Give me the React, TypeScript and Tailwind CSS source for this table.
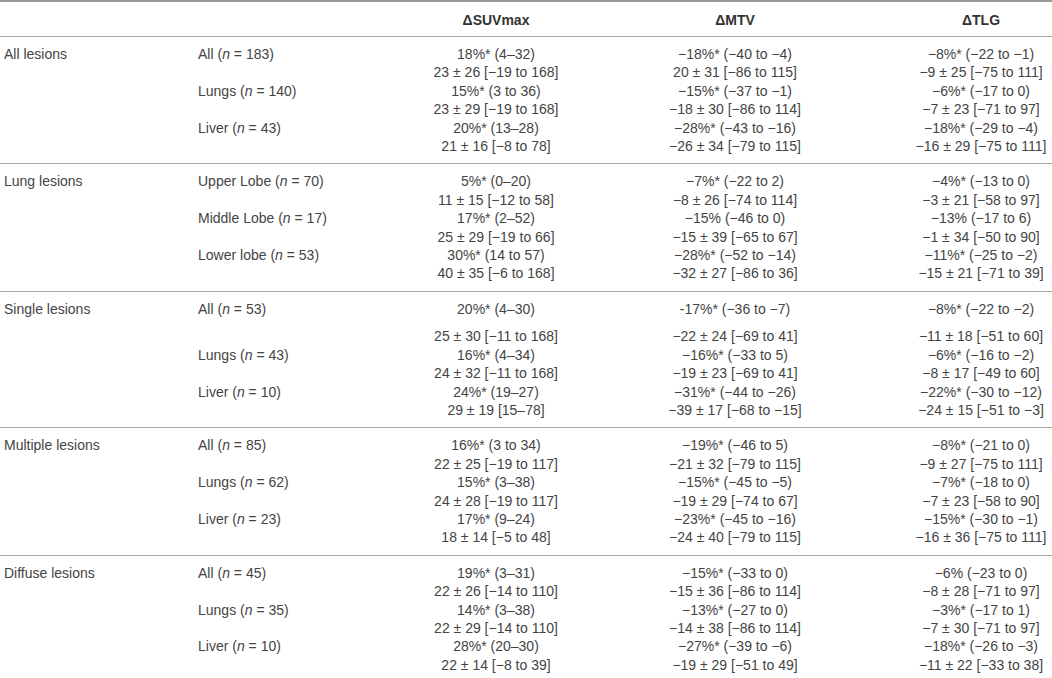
/**
 * Change in PET parameters by lesion group
 * Five lesion groups, each with sub-groups shown as median (IQR) / mean ± SD [range]
 */

type Group = {
  label: string;
  // sub-group labels, one per pair of rows
  subs: string[];
  // six rows of [ΔSUVmax, ΔMTV, ΔTLG]
  rows: string[][];
  // first row gets extra space below (as in the source table)
  loose?: boolean;
};

const groups: Group[] = [
  {
    label: 'All lesions',
    subs: ['All|183', 'Lungs|140', 'Liver|43'],
    rows: [
      ['18%* (4–32)', '−18%* (−40 to −4)', '−8%* (−22 to −1)'],
      ['23 ± 26 [−19 to 168]', '20 ± 31 [−86 to 115]', '−9 ± 25 [−75 to 111]'],
      ['15%* (3 to 36)', '−15%* (−37 to −1)', '−6%* (−17 to 0)'],
      ['23 ± 29 [−19 to 168]', '−18 ± 30 [−86 to 114]', '−7 ± 23 [−71 to 97]'],
      ['20%* (13–28)', '−28%* (−43 to −16)', '−18%* (−29 to −4)'],
      ['21 ± 16 [−8 to 78]', '−26 ± 34 [−79 to 115]', '−16 ± 29 [−75 to 111]'],
    ],
  },
  {
    label: 'Lung lesions',
    subs: ['Upper Lobe|70', 'Middle Lobe|17', 'Lower lobe|53'],
    rows: [
      ['5%* (0–20)', '−7%* (−22 to 2)', '−4%* (−13 to 0)'],
      ['11 ± 15 [−12 to 58]', '−8 ± 26 [−74 to 114]', '−3 ± 21 [−58 to 97]'],
      ['17%* (2–52)', '−15% (−46 to 0)', '−13% (−17 to 6)'],
      ['25 ± 29 [−19 to 66]', '−15 ± 39 [−65 to 67]', '−1 ± 34 [−50 to 90]'],
      ['30%* (14 to 57)', '−28%* (−52 to −14)', '−11%* (−25 to −2)'],
      ['40 ± 35 [−6 to 168]', '−32 ± 27 [−86 to 36]', '−15 ± 21 [−71 to 39]'],
    ],
  },
  {
    label: 'Single lesions',
    subs: ['All|53', 'Lungs|43', 'Liver|10'],
    loose: true,
    rows: [
      ['20%* (4–30)', '-17%* (−36 to −7)', '−8%* (−22 to −2)'],
      ['25 ± 30 [−11 to 168]', '−22 ± 24 [−69 to 41]', '−11 ± 18 [−51 to 60]'],
      ['16%* (4–34)', '−16%* (−33 to 5)', '−6%* (−16 to −2)'],
      ['24 ± 32 [−11 to 168]', '−19 ± 23 [−69 to 41]', '−8 ± 17 [−49 to 60]'],
      ['24%* (19–27)', '−31%* (−44 to −26)', '−22%* (−30 to −12)'],
      ['29 ± 19 [15–78]', '−39 ± 17 [−68 to −15]', '−24 ± 15 [−51 to −3]'],
    ],
  },
  {
    label: 'Multiple lesions',
    subs: ['All|85', 'Lungs|62', 'Liver|23'],
    rows: [
      ['16%* (3 to 34)', '−19%* (−46 to 5)', '−8%* (−21 to 0)'],
      ['22 ± 25 [−19 to 117]', '−21 ± 32 [−79 to 115]', '−9 ± 27 [−75 to 111]'],
      ['15%* (3–38)', '−15%* (−45 to −5)', '−7%* (−18 to 0)'],
      ['24 ± 28 [−19 to 117]', '−19 ± 29 [−74 to 67]', '−7 ± 23 [−58 to 90]'],
      ['17%* (9–24)', '−23%* (−45 to −16)', '−15%* (−30 to −1)'],
      ['18 ± 14 [−5 to 48]', '−24 ± 40 [−79 to 115]', '−16 ± 36 [−75 to 111]'],
    ],
  },
  {
    label: 'Diffuse lesions',
    subs: ['All|45', 'Lungs|35', 'Liver|10'],
    rows: [
      ['19%* (3–31)', '−15%* (−33 to 0)', '−6% (−23 to 0)'],
      ['22 ± 26 [−14 to 110]', '−15 ± 36 [−86 to 114]', '−8 ± 28 [−71 to 97]'],
      ['14%* (3–38)', '−13%* (−27 to 0)', '−3%* (−17 to 1)'],
      ['22 ± 29 [−14 to 110]', '−14 ± 38 [−86 to 114]', '−7 ± 30 [−71 to 97]'],
      ['28%* (20–30)', '−27%* (−39 to −6)', '−18%* (−26 to −3)'],
      ['22 ± 14 [−8 to 39]', '−19 ± 29 [−51 to 49]', '−11 ± 22 [−33 to 38]'],
    ],
  },
];

const cols = 'grid grid-cols-[198px_202px_192px_286px_174px]';

function SubLabel({ value }: { value: string }) {
  const [name, n] = value.split('|');
  return (
    <>
      {name} (<i>n</i> = {n})
    </>
  );
}

function GroupBlock({ group, last }: { group: Group; last: boolean }) {
  return (
    <div className={`pt-2 pb-2 ${last ? '' : 'border-b border-[#a8a8a8]'}`}>
      {group.rows.map((row, i) => (
        <div
          key={i}
          className={`${cols} leading-[18.4px] ${group.loose && i === 0 ? 'pb-[9px]' : ''}`}
        >
          <div className="pl-[4px]">{i === 0 ? group.label : ''}</div>
          <div>{i % 2 === 0 ? <SubLabel value={group.subs[i / 2]} /> : ''}</div>
          <div className="text-center">{row[0]}</div>
          <div className="text-center">{row[1]}</div>
          <div className="text-center pl-[32px]">{row[2]}</div>
        </div>
      ))}
    </div>
  );
}

export default function App() {
  return (
    <div className="w-[1052px] h-[678px] overflow-hidden bg-white text-[14px] text-[#444444] font-['Liberation_Sans',Arial,sans-serif]">
      <div className="border-t-2 border-[#9a9a9a]">
        {/* Header */}
        <div className={`${cols} h-[35px] pt-[2px] items-center font-bold text-[#333333] border-b border-[#a8a8a8]`}>
          <div />
          <div />
          <div className="text-center">ΔSUVmax</div>
          <div className="text-center">ΔMTV</div>
          <div className="text-center pl-[32px]">ΔTLG</div>
        </div>

        {groups.map((g, i) => (
          <GroupBlock key={g.label} group={g} last={i === groups.length - 1} />
        ))}
      </div>
    </div>
  );
}
